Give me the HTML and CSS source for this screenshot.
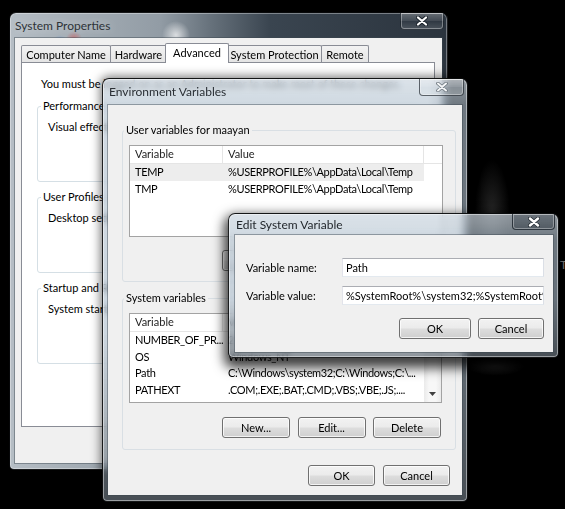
FILE: index.html
```html
<!DOCTYPE html>
<html>
<head>
<meta charset="utf-8">
<title>System Properties</title>
<link rel="stylesheet" href="styles.css">
</head>
<body>
<div class="desk">
  <span class="desk-t">T</span>

  <div class="win sp">
    <div class="titlebar">
      <span class="title">System Properties</span>
      <div class="close"><svg width="12" height="10" viewBox="0 0 12 10"><path d="M2 1.5L10 8.5M10 1.5L2 8.5" stroke="#1b232b" stroke-width="4" stroke-linecap="round"/><path d="M2 1.5L10 8.5M10 1.5L2 8.5" stroke="#fff" stroke-width="2.2" stroke-linecap="round"/></svg></div>
    </div>
    <div class="client">
      <div class="tabs">
        <div class="tab w-cn">Computer Name</div>
        <div class="tab w-hw">Hardware</div>
        <div class="tab sel w-adv">Advanced</div>
        <div class="tab w-sp">System Protection</div>
        <div class="tab w-rm">Remote</div>
      </div>
      <div class="panel">
        <p class="intro">You must be logged on as an Administrator to make most of these changes.</p>
        <fieldset class="grp"><legend>Performance</legend><p class="gdesc">Visual effects, processor scheduling, memory usage, and virtual memory</p></fieldset>
        <fieldset class="grp"><legend>User Profiles</legend><p class="gdesc">Desktop settings related to your logon</p></fieldset>
        <fieldset class="grp"><legend>Startup and Recovery</legend><p class="gdesc">System startup, system failure, and debugging information</p></fieldset>
      </div>
    </div>
  </div>

  <div class="win glass ev">
    <div class="titlebar">
      <span class="title">Environment Variables</span>
      <div class="close"><svg width="12" height="10" viewBox="0 0 12 10"><path d="M2 1.5L10 8.5M10 1.5L2 8.5" stroke="#6b747c" stroke-width="3.6" stroke-linecap="round"/><path d="M2 1.5L10 8.5M10 1.5L2 8.5" stroke="#f4f6f8" stroke-width="2" stroke-linecap="round"/></svg></div>
    </div>
    <div class="client">
      <fieldset class="vgrp user">
        <legend>User variables for maayan</legend>
        <div class="lv user-lv">
          <div class="lv-body">
            <div class="lv-head"><span class="c1">Variable</span><span class="c2">Value</span><span class="c3"></span></div>
            <div class="lv-row sel"><span class="c1">TEMP</span><span class="c2">%USERPROFILE%\AppData\Local\Temp</span></div>
            <div class="lv-row"><span class="c1">TMP</span><span class="c2">%USERPROFILE%\AppData\Local\Temp</span></div>
          </div>
        </div>
        <div class="btnrow"><button class="btn">New...</button><button class="btn">Edit...</button><button class="btn">Delete</button></div>
      </fieldset>
      <fieldset class="vgrp sys">
        <legend>System variables</legend>
        <div class="lv sys-lv">
          <div class="lv-body">
            <div class="lv-head"><span class="c1">Variable</span><span class="c2">Value</span></div>
            <div class="lv-row"><span class="c1">NUMBER_OF_PR...</span><span class="c2">2</span></div>
            <div class="lv-row"><span class="c1">OS</span><span class="c2">Windows_NT</span></div>
            <div class="lv-row"><span class="c1">Path</span><span class="c2">C:\Windows\system32;C:\Windows;C:\...</span></div>
            <div class="lv-row"><span class="c1">PATHEXT</span><span class="c2">.COM;.EXE;.BAT;.CMD;.VBS;.VBE;.JS;....</span></div>
            <div class="lv-row"><span class="c1">PROCESSOR_AR...</span><span class="c2">x86</span></div>
          </div>
          <div class="sb">
            <div class="sb-btn"><svg width="7" height="4" viewBox="0 0 7 4"><path d="M0 4H7L3.5 0Z" fill="#404040"/></svg></div>
            <div class="sb-thumb"></div>
            <div class="sb-track"></div>
            <div class="sb-btn"><svg width="7" height="4" viewBox="0 0 7 4"><path d="M0 0H7L3.5 4Z" fill="#404040"/></svg></div>
          </div>
        </div>
        <div class="btnrow"><button class="btn">New...</button><button class="btn">Edit...</button><button class="btn">Delete</button></div>
      </fieldset>
      <div class="dlgbtns"><button class="btn">OK</button><button class="btn">Cancel</button></div>
    </div>
  </div>

  <div class="win glass esv">
    <div class="titlebar">
      <span class="title">Edit System Variable</span>
      <div class="close"><svg width="12" height="10" viewBox="0 0 12 10"><path d="M2 1.5L10 8.5M10 1.5L2 8.5" stroke="#222a32" stroke-width="4" stroke-linecap="round"/><path d="M2 1.5L10 8.5M10 1.5L2 8.5" stroke="#fff" stroke-width="2.4" stroke-linecap="round"/></svg></div>
    </div>
    <div class="client">
      <div class="frow"><label>Variable name:</label><div class="field">Path</div></div>
      <div class="frow"><label>Variable value:</label><div class="field">%SystemRoot%\system32;%SystemRoot%;%SystemRoot%\System32\Wbem</div></div>
      <div class="dlgbtns"><button class="btn ok">OK</button><button class="btn cancel">Cancel</button></div>
    </div>
  </div>
</div>
</body>
</html>
```

FILE: styles.css
```css
* { box-sizing: border-box; }
html, body { margin: 0; padding: 0; background: #000; }
body { font-family: Lato, "Liberation Sans", Arial, sans-serif; font-size: 11px; color: #000; }
p { margin: 0; }

.desk {
  position: relative; width: 565px; height: 509px; overflow: hidden;
  background:
    radial-gradient(ellipse 18px 55px at 492px 215px, rgba(70,70,70,0.55), rgba(0,0,0,0) 100%),
    radial-gradient(ellipse 30px 10px at 495px 366px, rgba(55,55,55,0.5), rgba(0,0,0,0) 100%),
    #000;
}
.desk-t { position: absolute; left: 560px; top: 258px; color: #a8a8a8; font-size: 12px; line-height: 14px; }

/* windows */
.win { position: absolute; display: flex; flex-direction: column; border: 1px solid rgba(0,0,0,0.85); border-radius: 7px 7px 5px 5px; }
.titlebar { display: flex; align-items: flex-start; flex: none; }
.title { flex: 1; align-self: center; font-size: 12px; line-height: 16px; white-space: nowrap; overflow: hidden; }
.close {
  flex: none; width: 44px; height: 17px; margin-right: 3px;
  border: 1px solid rgba(20,28,36,0.65); border-top: none; border-radius: 0 0 4px 4px;
  display: flex; align-items: center; justify-content: center;
  background: linear-gradient(rgba(255,255,255,0.28), rgba(255,255,255,0.1) 50%, rgba(255,255,255,0.02) 51%, rgba(255,255,255,0.14));
  box-shadow: inset 0 0 0 1px rgba(255,255,255,0.35);
}
.client { flex: 1; background: #f0f0f0; box-shadow: 0 0 0 1px rgba(60,70,80,0.45); }

.glass {
  background:
    linear-gradient(180deg, rgba(255,255,255,0.28), rgba(255,255,255,0.05) 26px, rgba(0,0,0,0) 60%, rgba(0,0,0,0.3)),
    rgba(172,188,204,0.6);
  -webkit-backdrop-filter: blur(3px);
  backdrop-filter: blur(3px);
}

/* System Properties */
.sp {
  left: 9px; top: 12px; width: 439px; height: 458px;
  background:
    radial-gradient(circle 14px at 166px 22px, rgba(255,255,255,0.7), rgba(255,255,255,0)),
    radial-gradient(circle 8px at 64px 26px, rgba(220,60,60,0.5), rgba(220,60,60,0)),
    radial-gradient(circle 8px at 50px 30px, rgba(60,120,220,0.45), rgba(60,120,220,0)),
    radial-gradient(circle 7px at 60px 33px, rgba(80,180,90,0.4), rgba(80,180,90,0)),
    linear-gradient(90deg, #b6bec5 0px, #a3acb4 70px, #929ca5 150px, #67727c 200px, #3a4550 260px, #2b343e 100%);
  box-shadow: inset 0 0 0 1px rgba(255,255,255,0.35);
}
.sp .titlebar { height: 25px; padding-left: 5px; }
.sp .title { color: #2e3338; text-shadow: 0 0 8px rgba(255,255,255,0.5); }
.sp .client { margin: 0 5px 6px 5px; padding: 5px 7px 0 6px; }

.tabs { display: flex; align-items: flex-end; height: 19px; position: relative; z-index: 1; }
.tab {
  height: 17px; margin-left: -1px;
  border: 1px solid #898c95; border-bottom: none; border-radius: 2px 2px 0 0;
  background: linear-gradient(#f3f3f3, #e4e4e4);
  display: flex; align-items: center; justify-content: center; white-space: nowrap;
}
.tab:first-child { margin-left: 0; }
.tab.sel { height: 20px; margin: 0 -1px -1px -2px; padding-bottom: 2px; background: #fff; position: relative; z-index: 2; }
.w-cn { width: 90px; }
.w-hw { width: 57px; }
.w-adv { width: 64px; }
.w-sp { width: 95px; }
.w-rm { width: 48px; }

.panel { height: 365px; background: #fff; border: 1px solid #898c95; padding: 14px 15px 0 15px; }
.intro { margin-left: 4px; line-height: 14px; white-space: nowrap; }
.grp { margin: 8px 0 0 0; height: 83px; padding: 7px 10px 0 3px; border: 1px solid #d5dfe5; border-radius: 3px; min-width: 0; }
.grp legend { padding: 0 2px; line-height: 14px; }
.gdesc { margin-left: 7px; line-height: 14px; white-space: nowrap; }

/* Environment Variables */
.ev {
  left: 102px; top: 78px; width: 366px; height: 424px;
  box-shadow: inset 0 0 0 1px rgba(255,255,255,0.45), 0 0 10px 2px rgba(0,0,0,0.5);
}
.ev .titlebar { height: 26px; padding-left: 6px; }
.ev .title { color: #2a2f35; }
.ev .close { width: 45px; }
.ev .client { margin: 0 5px 6px 5px; padding: 18px 6px 0 14px; }

.vgrp { margin: 0; padding: 8px 12px 10px 1px; border: 1px solid #d9dfe4; border-radius: 3px; min-width: 0; }
.vgrp legend { padding: 0 2px; line-height: 14px; }
.vgrp.sys { margin-top: 9px; padding-bottom: 11px; }

.lv { margin-left: 5px; width: 314px; background: #fff; border: 1px solid #a3a3a3; display: flex; overflow: hidden; }
.user-lv { height: 92px; }
.sys-lv { height: 90px; width: 313px; }
.lv-body { flex: 1; overflow: hidden; }
.lv-head { display: flex; height: 18px; border-bottom: 1px solid #e5e5e5; color: #222; }
.lv-head span { border-right: 1px solid #e5e5e5; }
.lv-head .c3 { border-right: none; }
.lv-row { display: flex; height: 16.7px; width: 294px; }
.lv-row.sel { background: #ededed; }
.c1, .c2, .c3 { padding-left: 5px; line-height: 16px; white-space: nowrap; overflow: hidden; flex: none; }
.lv-row .c1, .lv-row .c2 { letter-spacing: -0.35px; }
.c1 { width: 93px; }
.c2 { width: 201px; }
.lv-head .c3 { flex: 1; }

.sb { width: 17px; flex: none; display: flex; flex-direction: column; background: linear-gradient(90deg, #eaeaea, #f7f7f7 30%, #f7f7f7 70%, #eaeaea); }
.sb-btn { height: 17px; flex: none; display: flex; align-items: center; justify-content: center; }
.sb-thumb { height: 22px; flex: none; margin: 0 1px; border: 1px solid #9a9a9a; border-radius: 2px; background: linear-gradient(90deg, #f4f4f4, #e2e2e2); }
.sb-track { flex: 1; }

.btn {
  height: 21px; padding: 0; font: inherit; color: #000;
  border: 1px solid #707070; border-radius: 3px;
  background: linear-gradient(#f2f2f2, #ebebeb 48%, #dddddd 52%, #cfcfcf);
  box-shadow: inset 0 0 0 1px rgba(255,255,255,0.75);
  display: flex; align-items: center; justify-content: center;
}
.btnrow { display: flex; justify-content: flex-end; gap: 7.5px; margin: 13px 2px 0 0; }
.btnrow .btn { width: 68px; }
.sys .btnrow { margin-top: 14px; }
.dlgbtns { display: flex; justify-content: flex-end; gap: 8px; }
.ev .dlgbtns { margin: 15px 6px 0 0; }
.ev .dlgbtns .btn { width: 67px; }

/* Edit System Variable */
.esv {
  left: 228px; top: 213px; width: 331px; height: 145px;
  box-shadow: inset 0 0 0 1px rgba(255,255,255,0.45), 0 6px 12px 4px rgba(0,0,0,0.75);
}
.esv .titlebar { height: 21px; padding-left: 7px; }
.esv .title { color: #1e2328; }
.esv .close { width: 43px; height: 16px; background: linear-gradient(rgba(40,50,60,0.35), rgba(30,40,50,0.45)); }
.esv .client { margin: 0 5px 5px 6px; padding: 23px 9px 0 11px; }
.frow { display: flex; align-items: center; height: 19px; }
.frow + .frow { margin-top: 9px; }
.frow label { width: 96px; flex: none; line-height: 14px; }
.field {
  width: 202px; height: 19px; flex: none; background: #fff;
  border: 1px solid; border-color: #abadb3 #dbdfe6 #e3e9ef #e2e3ea;
  padding: 0 3px; line-height: 17px; white-space: nowrap; overflow: hidden;
}
.esv .dlgbtns { margin-top: 13px; gap: 7px; }
.esv .ok { width: 72px; }
.esv .cancel { width: 66px; }
```
